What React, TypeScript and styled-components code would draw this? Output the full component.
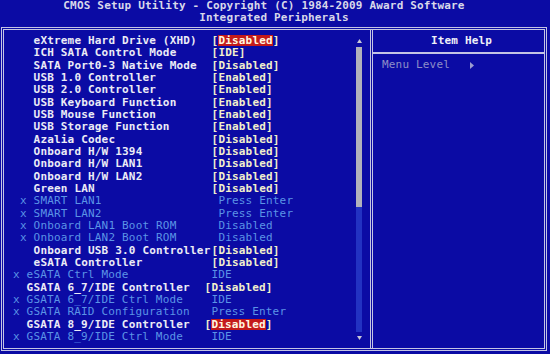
import React from "react";
import styled, { createGlobalStyle } from "styled-components";

const GlobalStyle = createGlobalStyle`
  html, body {
    margin: 0;
    padding: 0;
    background: #0b0ba4;
  }
  body {
    width: 550px;
    height: 354px;
    overflow: hidden;
    font-family: "DejaVu Sans Mono", "Liberation Mono", monospace;
    font-size: 11px;
    letter-spacing: 0.18px;
  }
`;

const Screen = styled.div`
  width: 550px;
  height: 354px;
  box-sizing: border-box;
  padding: 0 3px 3px 1px;
  background: #0b0ba4;
  display: flex;
  flex-direction: column;
`;

const Header = styled.header`
  height: 27px;
  display: flex;
  flex-direction: column;
  align-items: center;
  color: #d8d8ea;
  font-weight: bold;
  line-height: 12px;
`;

const HeadLine = styled.div<{ $nudge?: number }>`
  white-space: pre;
  padding-right: ${(p) => p.$nudge ?? 0}px;
`;

const Frame = styled.main`
  flex: 1;
  min-height: 0;
  display: flex;
  border: 3px double #c4c4e4;
`;

const LeftPane = styled.section`
  flex: 1;
  display: flex;
`;

const List = styled.div`
  flex: 1;
  padding-top: 5px;
`;

const Row = styled.div<{ $shift?: boolean }>`
  display: flex;
  height: 12.33px;
  line-height: 12.33px;
  padding-left: ${(p) => (p.$shift ? 9 : 16)}px;
  white-space: pre;
`;

const Marker = styled.span`
  width: 13.6px;
  flex: none;
  color: #5b94e6;
`;

const Label = styled.span<{ $dim?: boolean }>`
  width: 178px;
  flex: none;
  overflow: visible;
  color: ${(p) => (p.$dim ? "#5b94e6" : "#ececf6")};
  font-weight: ${(p) => (p.$dim ? "normal" : "bold")};
`;

const Value = styled.span<{ $dim?: boolean }>`
  color: ${(p) => (p.$dim ? "#5b94e6" : "#f2f0cc")};
  font-weight: ${(p) => (p.$dim ? "normal" : "bold")};
  padding-left: ${(p) => (p.$dim ? 6.8 : 0)}px;
`;

/* red selection bar, drawn as a band inside the inline box so rows keep their height */
const Highlight = styled.span`
  color: #fff6e0;
  background: linear-gradient(
    transparent 1px,
    #c41a1a 1px,
    #c41a1a 12px,
    transparent 12px
  );
`;

const Scroll = styled.div`
  width: 6px;
  margin: 0 8px 0 auto;
  padding: 9px 0 8px;
  display: flex;
  flex-direction: column;
  align-items: center;
  gap: 4px;
`;

const Track = styled.div`
  flex: 1;
  width: 6px;
  background: #2232c2;
  display: flex;
  flex-direction: column;
`;

const Thumb = styled.div`
  height: 160px;
  background: #b2b2bc;
`;

const RightPane = styled.aside`
  width: 171px;
  border-left: 3px double #c4c4e4;
  display: flex;
  flex-direction: column;
`;

const HelpTitle = styled.div`
  height: 22px;
  line-height: 22px;
  text-align: center;
  color: #f0f0f8;
  font-weight: bold;
  border-bottom: 2px solid #c4c4e4;
  padding-left: 6px;
`;

const HelpBody = styled.div`
  padding: 5px 9px;
  line-height: 12.33px;
  color: #8e8ec8;
  white-space: pre;
  display: flex;
  align-items: center;
`;

const TriUp = () => (
  <svg width="5" height="4" viewBox="0 0 5 4">
    <path d="M2.5 0L5 4H0Z" fill="#c8c8d8" />
  </svg>
);

const TriDown = () => (
  <svg width="5" height="4" viewBox="0 0 5 4">
    <path d="M0 0H5L2.5 4Z" fill="#c8c8d8" />
  </svg>
);

const TriRight = () => (
  <svg width="4" height="7" viewBox="0 0 4 7">
    <path d="M0 0L4 3.5L0 7Z" fill="#9c9cd0" />
  </svg>
);

type Item = {
  label: string;
  value: string;
  dim?: boolean;
  hl?: boolean;
  shift?: boolean;
};

const items: Item[] = [
  { label: "eXtreme Hard Drive (XHD)", value: "Disabled", hl: true },
  { label: "ICH SATA Control Mode", value: "IDE" },
  { label: "SATA Port0-3 Native Mode", value: "Disabled" },
  { label: "USB 1.0 Controller", value: "Enabled" },
  { label: "USB 2.0 Controller", value: "Enabled" },
  { label: "USB Keyboard Function", value: "Enabled" },
  { label: "USB Mouse Function", value: "Enabled" },
  { label: "USB Storage Function", value: "Enabled" },
  { label: "Azalia Codec", value: "Disabled" },
  { label: "Onboard H/W 1394", value: "Disabled" },
  { label: "Onboard H/W LAN1", value: "Disabled" },
  { label: "Onboard H/W LAN2", value: "Disabled" },
  { label: "Green LAN", value: "Disabled" },
  { label: "SMART LAN1", value: "Press Enter", dim: true },
  { label: "SMART LAN2", value: "Press Enter", dim: true },
  { label: "Onboard LAN1 Boot ROM", value: "Disabled", dim: true },
  { label: "Onboard LAN2 Boot ROM", value: "Disabled", dim: true },
  { label: "Onboard USB 3.0 Controller", value: "Disabled" },
  { label: "eSATA Controller", value: "Disabled" },
  { label: "eSATA Ctrl Mode", value: "IDE", dim: true, shift: true },
  { label: "GSATA 6_7/IDE Controller", value: "Disabled", shift: true },
  { label: "GSATA 6_7/IDE Ctrl Mode", value: "IDE", dim: true, shift: true },
  { label: "GSATA RAID Configuration", value: "Press Enter", dim: true, shift: true },
  { label: "GSATA 8_9/IDE Controller", value: "Disabled", hl: true, shift: true },
  { label: "GSATA 8_9/IDE Ctrl Mode", value: "IDE", dim: true, shift: true },
];

const SetupRow = ({ item }: { item: Item }) => (
  <Row $shift={item.shift}>
    <Marker>{item.dim ? "x" : " "}</Marker>
    <Label $dim={item.dim}>{item.label}</Label>
    <Value $dim={item.dim}>
      {item.dim ? (
        item.value
      ) : item.hl ? (
        <>
          [<Highlight>{item.value}</Highlight>]
        </>
      ) : (
        `[${item.value}]`
      )}
    </Value>
  </Row>
);

export default function App() {
  return (
    <>
      <GlobalStyle />
      <Screen>
        <Header>
          <HeadLine $nudge={20}>
            CMOS Setup Utility - Copyright (C) 1984-2009 Award Software
          </HeadLine>
          <HeadLine>Integrated Peripherals</HeadLine>
        </Header>
        <Frame>
          <LeftPane>
            <List>
              {items.map((it) => (
                <SetupRow key={it.label} item={it} />
              ))}
            </List>
            <Scroll>
              <TriUp />
              <Track>
                <Thumb />
              </Track>
              <TriDown />
            </Scroll>
          </LeftPane>
          <RightPane>
            <HelpTitle>Item Help</HelpTitle>
            <HelpBody>
              {"Menu Level   "}
              <TriRight />
            </HelpBody>
          </RightPane>
        </Frame>
      </Screen>
    </>
  );
}
